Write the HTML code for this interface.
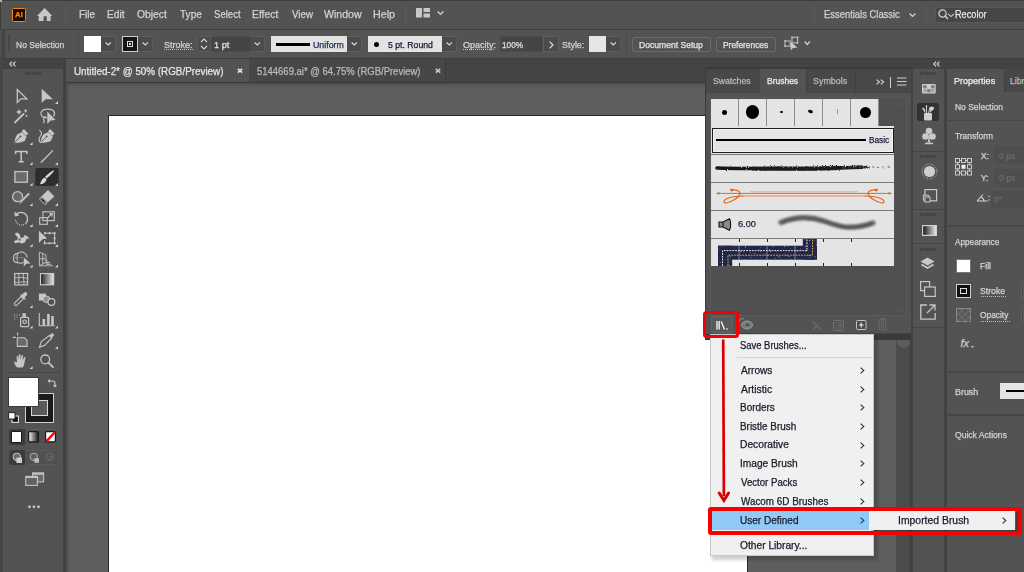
<!DOCTYPE html>
<html><head><meta charset="utf-8"><title>Illustrator</title>
<style>
*{margin:0;padding:0;box-sizing:border-box}
html,body{width:1024px;height:572px;overflow:hidden;background:#535353;font-family:"Liberation Sans",sans-serif;position:relative}
.a{position:absolute}
.t{position:absolute;white-space:nowrap;line-height:1;font-variant-ligatures:none;-webkit-text-stroke:0.25px currentColor}
svg.a{overflow:visible}
</style></head><body>

<div class="a" style="left:0px;top:0px;width:1024px;height:29px;background:#535353;"></div>
<div class="a" style="left:0px;top:0px;width:1024px;height:1px;background:#3e3e3e;"></div>
<div class="a" style="left:0px;top:0px;width:1px;height:572px;background:#3c3c3c;"></div>
<div class="a" style="left:0px;top:0px;width:1.5px;height:1.5px;background:#d8aa98;"></div>
<div class="a" style="left:12px;top:8px;width:14px;height:13.5px;background:#1e0c00;border:1.2px solid #f08a12;border-radius:1.5px"></div>
<div class="t" style="left:14.64px;top:10.93px;font-size:8px;color:#f7830a;font-weight:bold;transform:scaleX(0.9753);transform-origin:0 0;">Ai</div>
<svg class="a" style="left:37.3px;top:8.1px;" width="16" height="13.2" viewBox="0 0 16 13.2"><path d="M7.7 0 L15.3 7.9 L13.6 7.9 L13.6 13 L9.8 13 L9.8 8.2 L6.6 8.2 L6.6 13 L1.7 13 L1.7 7.9 L0 7.9 Z" fill="#c8c8c8"/></svg>
<div class="a" style="left:65px;top:6px;width:1px;height:17px;background:#5c5c5c;"></div>
<div class="t" style="left:78.90px;top:8.81px;font-size:10.5px;color:#d2d2d2;font-weight:normal;transform:scaleX(0.9524);transform-origin:0 0;">File</div>
<div class="t" style="left:106.99px;top:8.81px;font-size:10.5px;color:#d2d2d2;font-weight:normal;transform:scaleX(0.9698);transform-origin:0 0;">Edit</div>
<div class="t" style="left:137.18px;top:8.81px;font-size:10.5px;color:#d2d2d2;font-weight:normal;transform:scaleX(0.9860);transform-origin:0 0;">Object</div>
<div class="t" style="left:179.60px;top:8.81px;font-size:10.5px;color:#d2d2d2;font-weight:normal;transform:scaleX(0.9615);transform-origin:0 0;">Type</div>
<div class="t" style="left:213.52px;top:8.81px;font-size:10.5px;color:#d2d2d2;font-weight:normal;transform:scaleX(0.9104);transform-origin:0 0;">Select</div>
<div class="t" style="left:252.47px;top:8.81px;font-size:10.5px;color:#d2d2d2;font-weight:normal;transform:scaleX(0.9874);transform-origin:0 0;">Effect</div>
<div class="t" style="left:291.60px;top:8.81px;font-size:10.5px;color:#d2d2d2;font-weight:normal;transform:scaleX(0.9259);transform-origin:0 0;">View</div>
<div class="t" style="left:324.40px;top:8.81px;font-size:10.5px;color:#d2d2d2;font-weight:normal;transform:scaleX(1.0059);transform-origin:0 0;">Window</div>
<div class="t" style="left:373.44px;top:8.81px;font-size:10.5px;color:#d2d2d2;font-weight:normal;transform:scaleX(1.0211);transform-origin:0 0;">Help</div>
<div class="a" style="left:405px;top:6px;width:1px;height:17px;background:#5c5c5c;"></div>
<svg class="a" style="left:416px;top:8px;" width="15" height="10" viewBox="0 0 15 10"><rect x="0" y="0" width="6" height="9.5" fill="#c8c8c8"/><rect x="7.5" y="0" width="6.5" height="4" fill="#c8c8c8"/><rect x="7.5" y="5.5" width="6.5" height="4" fill="#c8c8c8"/></svg>
<svg class="a" style="left:437.3px;top:11px;" width="7" height="4" viewBox="0 0 7 4"><path d="M0.6 0.6 L3.5 3.4 L6.4 0.6" fill="none" stroke="#d0d0d0" stroke-width="1.4"/></svg>
<div class="a" style="left:814px;top:6px;width:1px;height:17px;background:#5c5c5c;"></div>
<div class="t" style="left:823.85px;top:8.81px;font-size:10.5px;color:#d2d2d2;font-weight:normal;transform:scaleX(0.8961);transform-origin:0 0;">Essentials Classic</div>
<svg class="a" style="left:908.5px;top:13px;" width="7" height="4" viewBox="0 0 7 4"><path d="M0.6 0.6 L3.5 3.4 L6.4 0.6" fill="none" stroke="#d0d0d0" stroke-width="1.4"/></svg>
<div class="a" style="left:926px;top:6px;width:1px;height:17px;background:#5c5c5c;"></div>
<div class="a" style="left:935px;top:6.8px;width:95px;height:16.2px;background:#464646;border-radius:3px;border:1px solid #585858"></div>
<svg class="a" style="left:937.5px;top:8.8px;" width="17" height="12" viewBox="0 0 17 12"><circle cx="4.5" cy="4.5" r="3.6" fill="none" stroke="#cfcfcf" stroke-width="1.3"/><path d="M7.1 7.1 L9.4 9.6" stroke="#cfcfcf" stroke-width="1.5" stroke-linecap="round"/><path d="M10 4.8 L13 7.6 L16 4.8" fill="none" stroke="#cfcfcf" stroke-width="1.1"/></svg>
<div class="t" style="left:955.17px;top:8.81px;font-size:10.5px;color:#e6e6e6;font-weight:normal;transform:scaleX(0.8728);transform-origin:0 0;">Recolor</div>
<div class="a" style="left:0px;top:29px;width:1024px;height:1px;background:#3f3f3f;"></div>
<div class="a" style="left:0px;top:30px;width:1024px;height:28px;background:#535353;"></div>
<div class="a" style="left:1px;top:30px;width:2.5px;height:28px;background:#474747;"></div>
<div class="a" style="left:3.5px;top:30px;width:1px;height:28px;background:#424242;"></div>
<svg class="a" style="left:8px;top:35px;" width="2" height="17" viewBox="0 0 2 17"><path d="M1 0 V17" stroke="#3a3a3a" stroke-width="1.6" stroke-dasharray="1.3 1"/></svg>
<div class="t" style="left:16.32px;top:40.89px;font-size:8.4px;color:#d2d2d2;font-weight:normal;transform:scaleX(1.0158);transform-origin:0 0;">No Selection</div>
<div class="a" style="left:78px;top:34px;width:1px;height:20px;background:#4a4a4a;"></div>
<div class="a" style="left:84px;top:36px;width:17px;height:16px;background:#ffffff;"></div>
<div class="a" style="left:101px;top:36px;width:15px;height:16px;background:#4b4b4b;border:1px solid #5d5d5d;border-left:none;border-radius:0 2px 2px 0"></div>
<svg class="a" style="left:105.2px;top:41.8px;" width="6.5" height="3.5" viewBox="0 0 6.5 3.5"><path d="M0.6 0.6 L3.25 2.9 L5.9 0.6" fill="none" stroke="#d6d6d6" stroke-width="1.3"/></svg>
<div class="a" style="left:122px;top:36px;width:16px;height:16px;background:#161616;border:1px solid #cfcfcf"></div>
<div class="a" style="left:127px;top:41px;width:6px;height:6px;border:1px solid #e0e0e0"></div>
<div class="a" style="left:129px;top:43px;width:2px;height:2px;background:#e0e0e0;"></div>
<div class="a" style="left:138px;top:36px;width:15px;height:16px;background:#4b4b4b;border:1px solid #5d5d5d;border-left:none;border-radius:0 2px 2px 0"></div>
<svg class="a" style="left:142.2px;top:41.8px;" width="6.5" height="3.5" viewBox="0 0 6.5 3.5"><path d="M0.6 0.6 L3.25 2.9 L5.9 0.6" fill="none" stroke="#d6d6d6" stroke-width="1.3"/></svg>
<div class="t" style="left:163.55px;top:41.39px;font-size:8.4px;color:#d2d2d2;font-weight:normal;transform:scaleX(1.0765);transform-origin:0 0;">Stroke:</div>
<svg class="a" style="left:164px;top:49px;" width="29" height="1" viewBox="0 0 29 1"><path d="M0 0.5 H29" stroke="#c0c0c0" stroke-width="1" stroke-dasharray="1 1"/></svg>
<div class="a" style="left:197px;top:36px;width:14px;height:16px;background:#4b4b4b;border:1px solid #5d5d5d;border-radius:2px 0 0 2px"></div>
<svg class="a" style="left:200px;top:38px;" width="8" height="12" viewBox="0 0 8 12"><path d="M1 4 L4 1 L7 4 M1 8 L4 11 L7 8" fill="none" stroke="#d6d6d6" stroke-width="1.1"/></svg>
<div class="a" style="left:211px;top:36px;width:39px;height:16px;background:#454545;border-top:1px solid #4d4d4d;border-bottom:1px solid #4d4d4d"></div>
<div class="t" style="left:214.36px;top:41.39px;font-size:8.4px;color:#e0e0e0;font-weight:normal;transform:scaleX(1.0931);transform-origin:0 0;">1 pt</div>
<div class="a" style="left:250px;top:36px;width:15px;height:16px;background:#4b4b4b;border:1px solid #5d5d5d;border-left:none;border-radius:0 2px 2px 0"></div>
<svg class="a" style="left:254.2px;top:41.8px;" width="6.5" height="3.5" viewBox="0 0 6.5 3.5"><path d="M0.6 0.6 L3.25 2.9 L5.9 0.6" fill="none" stroke="#d6d6d6" stroke-width="1.3"/></svg>
<div class="a" style="left:271px;top:36px;width:76px;height:16px;background:#e3e3e3;"></div>
<div class="a" style="left:276px;top:43px;width:34px;height:3px;background:#000;"></div>
<div class="t" style="left:312.70px;top:41.22px;font-size:8.6px;color:#1e2a50;font-weight:normal;transform:scaleX(1.0244);transform-origin:0 0;">Uniform</div>
<div class="a" style="left:347px;top:36px;width:15px;height:16px;background:#4b4b4b;border:1px solid #5d5d5d;border-left:none;border-radius:0 2px 2px 0"></div>
<svg class="a" style="left:351.2px;top:41.8px;" width="6.5" height="3.5" viewBox="0 0 6.5 3.5"><path d="M0.6 0.6 L3.25 2.9 L5.9 0.6" fill="none" stroke="#d6d6d6" stroke-width="1.3"/></svg>
<div class="a" style="left:368px;top:36px;width:74px;height:16px;background:#e3e3e3;"></div>
<div class="a" style="left:374px;top:41.5px;width:5px;height:5px;border-radius:50%;background:#000"></div>
<div class="t" style="left:388.25px;top:41.22px;font-size:8.6px;color:#161a30;font-weight:normal;transform:scaleX(1.0111);transform-origin:0 0;">5 pt. Round</div>
<div class="a" style="left:442px;top:36px;width:15px;height:16px;background:#4b4b4b;border:1px solid #5d5d5d;border-left:none;border-radius:0 2px 2px 0"></div>
<svg class="a" style="left:446.2px;top:41.8px;" width="6.5" height="3.5" viewBox="0 0 6.5 3.5"><path d="M0.6 0.6 L3.25 2.9 L5.9 0.6" fill="none" stroke="#d6d6d6" stroke-width="1.3"/></svg>
<div class="t" style="left:462.55px;top:41.39px;font-size:8.4px;color:#d2d2d2;font-weight:normal;transform:scaleX(1.0724);transform-origin:0 0;">Opacity:</div>
<svg class="a" style="left:463px;top:49px;" width="32" height="1" viewBox="0 0 32 1"><path d="M0 0.5 H32" stroke="#c0c0c0" stroke-width="1" stroke-dasharray="1 1"/></svg>
<div class="a" style="left:500px;top:36px;width:43px;height:16px;background:#454545;border:1px solid #4d4d4d;border-radius:2px 0 0 2px"></div>
<div class="t" style="left:502.42px;top:41.39px;font-size:8.4px;color:#e0e0e0;font-weight:normal;transform:scaleX(0.9824);transform-origin:0 0;">100%</div>
<div class="a" style="left:543px;top:36px;width:16px;height:16px;background:#4b4b4b;border:1px solid #5d5d5d;border-radius:0 2px 2px 0"></div>
<svg class="a" style="left:548.5px;top:40.5px;" width="5" height="8" viewBox="0 0 5 8"><path d="M0.6 0.6 L4 4 L0.6 7.4" fill="none" stroke="#d6d6d6" stroke-width="1.3"/></svg>
<div class="t" style="left:562.25px;top:41.39px;font-size:8.4px;color:#d2d2d2;font-weight:normal;transform:scaleX(1.0644);transform-origin:0 0;">Style:</div>
<div class="a" style="left:589px;top:36px;width:17px;height:16px;background:#e6e6e6;"></div>
<div class="a" style="left:606px;top:36px;width:15px;height:16px;background:#4b4b4b;border:1px solid #5d5d5d;border-left:none;border-radius:0 2px 2px 0"></div>
<svg class="a" style="left:610.2px;top:41.8px;" width="6.5" height="3.5" viewBox="0 0 6.5 3.5"><path d="M0.6 0.6 L3.25 2.9 L5.9 0.6" fill="none" stroke="#d6d6d6" stroke-width="1.3"/></svg>
<div class="a" style="left:626px;top:34px;width:1px;height:20px;background:#4a4a4a;"></div>
<div class="a" style="left:632px;top:36.5px;width:79px;height:15.5px;border:1px solid #6b6b6b;border-radius:2px"></div>
<div class="t" style="left:639.31px;top:41.39px;font-size:8.4px;color:#e4e4e4;font-weight:normal;transform:scaleX(1.0232);transform-origin:0 0;">Document Setup</div>
<div class="a" style="left:716px;top:36.5px;width:60px;height:15.5px;border:1px solid #6b6b6b;border-radius:2px"></div>
<div class="t" style="left:722.93px;top:41.39px;font-size:8.4px;color:#e4e4e4;font-weight:normal;transform:scaleX(1.0011);transform-origin:0 0;">Preferences</div>
<svg class="a" style="left:783px;top:35px;" width="16" height="17" viewBox="0 0 16 17"><g fill="none" stroke="#bdbdbd" stroke-width="1.1"><rect x="9" y="2.3" width="5.6" height="5.6"/><rect x="2" y="6" width="5.2" height="5.2"/></g><g fill="#bdbdbd"><rect x="8.2" y="1.5" width="1.6" height="1.6"/><rect x="13.8" y="1.5" width="1.6" height="1.6"/><rect x="13.8" y="7.1" width="1.6" height="1.6"/><rect x="1.2" y="5.2" width="1.6" height="1.6"/><rect x="1.2" y="10.4" width="1.6" height="1.6"/></g><path d="M7.7 7 L7.7 15.3 L10 13 L14.4 12.6 Z" fill="#d0d0d0"/></svg>
<svg class="a" style="left:804px;top:41px;" width="6.5" height="4" viewBox="0 0 6.5 4"><path d="M0.6 0.6 L3.25 3.4 L5.9 0.6" fill="none" stroke="#d0d0d0" stroke-width="1.4"/></svg>
<div class="a" style="left:0px;top:57.5px;width:1024px;height:1.5px;background:#3d3d3d;"></div>
<div class="a" style="left:0px;top:59px;width:64px;height:513px;background:#535353;"></div>
<div class="a" style="left:0px;top:59px;width:3px;height:513px;background:#474747;"></div>
<div class="a" style="left:3px;top:59px;width:61px;height:10px;background:#434343;"></div>
<svg class="a" style="left:8.6px;top:61px;" width="7" height="6" viewBox="0 0 7 6"><path d="M3 0.6 L0.8 3 L3 5.4 M6.4 0.6 L4.2 3 L6.4 5.4" fill="none" stroke="#d0d0d0" stroke-width="1.2"/></svg>
<svg class="a" style="left:25px;top:72px;" width="17" height="3" viewBox="0 0 17 3"><path d="M0 1.5 H17" stroke="#3a3a3a" stroke-width="3" stroke-dasharray="1.2 1.2"/></svg>
<div class="a" style="left:63px;top:59px;width:3px;height:513px;background:#404040;"></div>
<svg class="a" style="left:0;top:0" width="64" height="572" viewBox="0 0 64 572"><path d="M58 101 L58 104 L55 104 Z" fill="#d0d0d0"/><path d="M32.6 141.9 L32.6 144.9 L29.6 144.9 Z" fill="#d0d0d0"/><path d="M32.6 162 L32.6 165 L29.6 165 Z" fill="#d0d0d0"/><path d="M58 162 L58 165 L55 165 Z" fill="#d0d0d0"/><path d="M32.6 182.8 L32.6 185.8 L29.6 185.8 Z" fill="#d0d0d0"/><path d="M58 183 L58 186 L55 186 Z" fill="#d0d0d0"/><path d="M32.6 203 L32.6 206 L29.6 206 Z" fill="#d0d0d0"/><path d="M58 203 L58 206 L55 206 Z" fill="#d0d0d0"/><path d="M32.6 224 L32.6 227 L29.6 227 Z" fill="#d0d0d0"/><path d="M58 224 L58 227 L55 227 Z" fill="#d0d0d0"/><path d="M32.6 244 L32.6 247 L29.6 247 Z" fill="#d0d0d0"/><path d="M58 244 L58 247 L55 247 Z" fill="#d0d0d0"/><path d="M32.6 264.5 L32.6 267.5 L29.6 267.5 Z" fill="#d0d0d0"/><path d="M58 264.5 L58 267.5 L55 267.5 Z" fill="#d0d0d0"/><path d="M32.6 305 L32.6 308 L29.6 308 Z" fill="#d0d0d0"/><path d="M32.6 325.5 L32.6 328.5 L29.6 328.5 Z" fill="#d0d0d0"/><path d="M58 325.5 L58 328.5 L55 328.5 Z" fill="#d0d0d0"/><path d="M58 346 L58 349 L55 349 Z" fill="#d0d0d0"/><path d="M32.6 366 L32.6 369 L29.6 369 Z" fill="#d0d0d0"/><path d="M17.3 89.6 L17.3 102.4 L20.9 98.9 L26.8 98.9 Z" fill="none" stroke="#c6c6c6" stroke-width="1.3" stroke-linejoin="miter"/><path d="M41.7 88.7 L41.7 103 L45.4 99.3 L52.9 99.3 Z" fill="#c6c6c6"/><path d="M15 122.4 L23.6 114" stroke="#c6c6c6" stroke-width="1.9" stroke-linecap="round"/><path d="M19 109 L19.96 111.04 L22 112 L19.96 112.96 L19 115 L18.04 112.96 L16 112 L18.04 111.04 Z M25.6 108.7 L26.272000000000002 110.128 L27.700000000000003 110.8 L26.272000000000002 111.472 L25.6 112.89999999999999 L24.928 111.472 L23.5 110.8 L24.928 110.128 Z M26.6 114.4 L27.112000000000002 115.488 L28.200000000000003 116 L27.112000000000002 116.512 L26.6 117.6 L26.088 116.512 L25.0 116 L26.088 115.488 Z" fill="#c6c6c6"/><path d="M46.5 117.8 C41.5 117.8 39.6 114 41.6 111.4 C44 108.4 52 108.4 54 111.6 C55 113.2 54.6 115 53.2 116.2" fill="none" stroke="#c6c6c6" stroke-width="1.2"/><path d="M46.5 117.8 C44.8 115.8 42.6 117.5 43.8 119.6 C44.6 121 44.2 122.2 43.2 123" fill="none" stroke="#c6c6c6" stroke-width="1.1"/><path d="M47.3 111.6 L47.3 124 L50.5 120.4 L55.6 120.1 Z" fill="#c6c6c6"/><path d="M14.3 142.7 C15 139.5 15.6 136.2 17.4 134.2 L21.8 132.2 L26.6 136.6 L24.7 141 C22 142.4 18 142.9 14.3 142.7 Z" fill="#c6c6c6"/><path d="M21.6 131.4 L23.9 129.1 L28.3 133.5 L26 135.8 Z" fill="#c6c6c6"/><path d="M14.8 142.2 L19.6 137.4" stroke="#535353" stroke-width="0.9"/><circle cx="20.4" cy="136.6" r="1" fill="#535353"/><path d="M40.5 142.7 C41.2 139.5 41.8 136.2 43.599999999999994 134.2 L48.0 132.2 L52.8 136.6 L50.9 141 C48.2 142.4 44.2 142.9 40.5 142.7 Z" fill="#c6c6c6"/><path d="M47.8 131.4 L50.099999999999994 129.1 L54.5 133.5 L52.2 135.8 Z" fill="#c6c6c6"/><path d="M41.0 142.2 L45.8 137.4" stroke="#535353" stroke-width="0.9"/><circle cx="46.599999999999994" cy="136.6" r="1" fill="#535353"/><path d="M39.3 130.1 C41 131.2 42 132.8 41.2 134.6 C40.4 136.4 38.8 137.6 39 139.6 C39.1 141 40 142.2 41 142.6" fill="none" stroke="#c6c6c6" stroke-width="1.1"/><path d="M15.6 154 V151.5 H26.8 V154 M21.2 151.5 V161.8 M18.6 161.8 H23.8" fill="none" stroke="#c6c6c6" stroke-width="1.5"/><path d="M41.3 162.3 L52.7 150.6" stroke="#c6c6c6" stroke-width="1.3" stroke-linecap="round"/><rect x="14.9" y="171.6" width="12.5" height="10.6" fill="#6b6b6b" stroke="#c6c6c6" stroke-width="1.3"/><rect x="35.2" y="168" width="23.5" height="18" rx="2" fill="#2d2d2d"/><path d="M58 183 L58 186 L55 186 Z" fill="#d0d0d0"/><path d="M54.4 170.1 C53.4 172.6 49.4 176.2 46.6 178.6 L45 177 C47.6 174.4 51.6 171 54.4 170.1 Z" fill="#d8d8d8"/><path d="M44.6 177.4 L46.6 179.4 C45.8 182.4 43.2 184.1 39.8 184.3 C41 182.2 41.4 178.9 44.6 177.4 Z" fill="#d8d8d8"/><circle cx="17.6" cy="196.7" r="5" fill="#686868" stroke="#c6c6c6" stroke-width="1.3"/><path d="M19 204.4 L20 200.9 L28 192.9 C28.9 192 30.6 193.7 29.7 194.6 L21.7 202.6 Z" fill="#c6c6c6" stroke="#535353" stroke-width="0.6"/><path d="M48 190 L54.4 196.4 L47.6 202.4 L41.4 196.4 Z" fill="#c6c6c6"/><path d="M41.4 197.2 L47 202.8 L45 204.6 L40 199.6 C39.4 199 39.6 198.6 40 198.3 Z" fill="#535353" stroke="#c6c6c6" stroke-width="1"/><path d="M42.2 199.4 L44.6 201.8" stroke="#2b2b2b" stroke-width="1.6"/><path d="M16.3 214.2 A6.2 6.2 0 1 1 25.6 223.6" fill="none" stroke="#c6c6c6" stroke-width="1.3"/><path d="M25.6 223.6 A6.2 6.2 0 0 1 15.4 219" fill="none" stroke="#c6c6c6" stroke-width="1.2" stroke-dasharray="0.9 1.1"/><path d="M14.4 211.6 L14.8 216.4 L19.4 215.6 Z" fill="#c6c6c6"/><rect x="42.9" y="211.8" width="11.4" height="8.8" fill="none" stroke="#c6c6c6" stroke-width="1.1"/><rect x="39.7" y="217.7" width="7.6" height="6.6" fill="none" stroke="#c6c6c6" stroke-width="1.1"/><path d="M47.5 218 L51.8 213.8 M49.3 213.6 H52.1 V216.4" fill="none" stroke="#c6c6c6" stroke-width="1.1"/><path d="M14 241.5 C15 240 17 241 17.6 239 C18.6 236 15 236 15.2 234 C15.4 232 18.4 232.2 19.8 234.6 C21 236.6 20 238.4 22 238 C23.4 237.6 22.6 234.8 25 235.2 C27.4 235.6 29 237.6 29.4 239.6 C28.2 238.4 27 238.2 26.4 239.2 C25.8 240.6 25.2 243.6 21.6 243.4 C19.6 243.3 18.6 242.2 17.2 242.8 C16 243.6 14.6 243.4 14 241.5 Z" fill="#c6c6c6"/><circle cx="19.6" cy="239.6" r="1.1" fill="#535353"/><circle cx="23.4" cy="236" r="0.9" fill="#535353"/><path d="M38.9 230.8 L38.9 243 L42.6 239.2 L47.2 238.6 Z" fill="#c6c6c6"/><path d="M45.6 233.2 H54.6 V243.2 H44.6 V240.5" fill="none" stroke="#c6c6c6" stroke-width="1"/><g fill="#c6c6c6"><rect x="44" y="232.2" width="2" height="2"/><rect x="48.6" y="232.2" width="2" height="2"/><rect x="53.6" y="232.2" width="2" height="2"/><rect x="53.6" y="237.2" width="2" height="2"/><rect x="53.6" y="242.2" width="2" height="2"/><rect x="48.6" y="242.2" width="2" height="2"/><rect x="43.6" y="242.2" width="2" height="2"/></g><path d="M23.5 262.2 C22 263.2 19.5 263.4 17.8 262.6 C16.2 263 13.4 262 13.4 258.4 C13.4 255 15.4 253.4 17.6 253.6 C19.4 251.4 23 251.4 25 253.4 C26.6 254.8 27.2 256.4 27 257.6" fill="none" stroke="#c6c6c6" stroke-width="1.1"/><path d="M17.8 253.8 C16.6 256 16.6 260 17.8 262.6" fill="none" stroke="#c6c6c6" stroke-width="0.9"/><path d="M15 257.7 H23" stroke="#c6c6c6" stroke-width="1" stroke-dasharray="1 1.2"/><path d="M23.8 257.4 L23.8 266.4 L26.3 263.8 L30.6 263.4 Z" fill="#c6c6c6"/><path d="M39.4 252.2 V265.8 H52.8 M39.4 252.2 L46 255 V262.4 L39.4 265.8 M39.4 258.8 H46 M42.8 253.6 V264 M46 262.4 H49.6 M46 260.6 H47.6" fill="none" stroke="#c6c6c6" stroke-width="0.9"/><path d="M46 262.4 L52.8 265.8 H46 Z" fill="#8c8c8c"/><path d="M46 264.2 H51.4 M46 262.4 H49.6" stroke="#c6c6c6" stroke-width="0.8"/><rect x="14.7" y="273.5" width="12.9" height="11.4" fill="none" stroke="#c6c6c6" stroke-width="1.2"/><path d="M14.7 277.6 C18 278.6 21 276 27.6 278.6 M14.7 282 C19 283.4 22 280.4 27.6 282.6 M18.6 273.5 C19.6 277 17.8 280.6 19.2 284.9 M23.4 273.5 C22.8 277 24.6 281 23.8 284.9" fill="none" stroke="#c6c6c6" stroke-width="0.9"/><defs><linearGradient id="gt" x1="0" x2="1"><stop offset="0" stop-color="#1e1e1e"/><stop offset="1" stop-color="#ececec"/></linearGradient></defs><rect x="40.5" y="273.6" width="13.2" height="11.2" fill="url(#gt)" stroke="#d0d0d0" stroke-width="1.1"/><path d="M15.2 305.4 C14 304.6 14.2 303.4 15 302.6 L21.8 295.8 L24 298 L17.2 304.8 C16.4 305.6 15.8 305.8 15.2 305.4 Z" fill="none" stroke="#c6c6c6" stroke-width="1.1"/><path d="M21 296.4 L24.6 293 C25.6 292 27.4 293.8 26.4 294.8 L23.2 298.2 Z M20.6 294.6 L25.6 299.6" fill="#c6c6c6" stroke="#c6c6c6" stroke-width="1.2"/><rect x="38.9" y="293.6" width="7" height="7" fill="#c6c6c6"/><circle cx="46.4" cy="299.3" r="3.3" fill="#8e8e8e" stroke="#c6c6c6" stroke-width="1"/><circle cx="51.4" cy="302" r="3.4" fill="#535353" stroke="#c6c6c6" stroke-width="1.2"/><path d="M14 314.8 h1.2 M16.4 314.8 h1.2 M18.8 314.8 h1.2 M14 317.2 h1.2 M16.4 317.2 h1.2 M14 319.6 h1.2" stroke="#9a9a9a" stroke-width="1.2"/><rect x="20.6" y="317.4" width="8" height="9.3" rx="1" fill="none" stroke="#c6c6c6" stroke-width="1.2"/><rect x="22.4" y="313.2" width="3.4" height="3.6" fill="#c6c6c6"/><circle cx="24.6" cy="321.8" r="1.8" fill="none" stroke="#c6c6c6" stroke-width="1.2"/><path d="M39.3 313 V325.7 H54.7" fill="none" stroke="#c6c6c6" stroke-width="1.1"/><path d="M43.8 325.2 V318.9 M48.4 325.2 V314.1 M52.5 325.2 V315.9" stroke="#c6c6c6" stroke-width="2.6"/><path d="M17.6 332.6 V335.6 M12.8 337.4 H15.8" stroke="#c6c6c6" stroke-width="1.1"/><path d="M17.3 337.7 H24.4 L27 340.3 V346.4 H17.3 Z" fill="#686868" stroke="#c6c6c6" stroke-width="1.1"/><path d="M39.4 347.2 L41.4 341.6 L49.4 335.6 L51.8 338 L44.8 345.2 Z" fill="none" stroke="#c6c6c6" stroke-width="1.1"/><path d="M49.4 335.6 L51.6 333.4 C52.6 332.6 54.6 334.4 53.8 335.4 L51.8 338 Z" fill="#c6c6c6"/><path d="M17.2 367.6 C15.4 365.6 13.8 363.2 14.4 362 C15 361.2 16.2 361.8 17 362.8 L16.6 356.8 C16.6 355.8 18.1 355.8 18.2 356.8 L18.7 360.6 L18.7 355 C18.7 353.9 20.4 353.9 20.4 355 L20.7 360.6 L21.4 355.6 C21.5 354.6 23.1 354.8 23 355.8 L22.6 361 L23.9 357.6 C24.2 356.7 25.6 357 25.4 358 L24.4 363 C24 365.4 23.2 366.8 22.6 367.6 Z" fill="#c6c6c6"/><circle cx="45.2" cy="359.4" r="4.4" fill="none" stroke="#c6c6c6" stroke-width="1.3"/><path d="M48.4 362.6 L53 367.2" stroke="#c6c6c6" stroke-width="1.8" stroke-linecap="round"/></svg>
<div class="a" style="left:8px;top:372px;width:52px;height:1px;background:#474747;"></div>
<div class="a" style="left:25px;top:393px;width:29px;height:30px;background:#1b1b1b;border:1px solid #d0d0d0"></div>
<div class="a" style="left:31px;top:400px;width:16.5px;height:16px;background:#5a5a5a;border:1.4px solid #d8d8d8"></div>
<div class="a" style="left:8.4px;top:377.4px;width:30.4px;height:30px;background:#ffffff;border:1px solid #3a3a3a"></div>
<svg class="a" style="left:46.5px;top:378px;" width="10" height="10" viewBox="0 0 10 10"><path d="M2 3 H5.5 C7 3 8 4 8 5.5 V8" fill="none" stroke="#c6c6c6" stroke-width="1.2"/><path d="M0.5 3 L3 0.8 V5.2 Z M5.8 7 L10 7 L8 9.6 Z" fill="#c6c6c6"/></svg>
<svg class="a" style="left:8px;top:412px;" width="11" height="11" viewBox="0 0 11 11"><rect x="4" y="4" width="6.4" height="6.4" fill="#111" stroke="#e0e0e0" stroke-width="1.1"/><rect x="0.6" y="0.6" width="6.4" height="6.4" fill="#fff" stroke="#222" stroke-width="1"/></svg>
<div class="a" style="left:9.2px;top:428.6px;width:49.6px;height:16.7px;background:#505050;border:1px solid #5a5a5a;border-radius:3px"></div>
<div class="a" style="left:9.2px;top:428.6px;width:15.6px;height:16.7px;background:#3a3a3a;border-radius:3px 0 0 3px"></div>
<div class="a" style="left:11.3px;top:431.3px;width:10.8px;height:11.4px;background:#ffffff;border:1.2px solid #1a1a1a;border-radius:1px"></div>
<svg class="a" style="left:28px;top:431.3px;" width="11" height="11.4" viewBox="0 0 11 11.4"><defs><linearGradient id="g2" x1="0" x2="1"><stop offset="0" stop-color="#f4f4f4"/><stop offset="1" stop-color="#1a1a1a"/></linearGradient></defs><rect x="0.6" y="0.6" width="9.8" height="10.2" rx="1" fill="url(#g2)" stroke="#1a1a1a" stroke-width="1.2"/></svg>
<svg class="a" style="left:45px;top:431.3px;" width="11" height="11.4" viewBox="0 0 11 11.4"><rect x="0.6" y="0.6" width="9.8" height="10.2" rx="1" fill="#fff" stroke="#1a1a1a" stroke-width="1.2"/><path d="M1.4 10.4 L9.8 1.2" stroke="#ff0000" stroke-width="2.4"/></svg>
<div class="a" style="left:9.2px;top:450.3px;width:49.6px;height:14.7px;background:#505050;border:1px solid #595959;border-radius:3px"></div>
<div class="a" style="left:9.2px;top:450.3px;width:15.6px;height:14.7px;background:#3b3b3b;border-radius:3px 0 0 3px"></div>
<svg class="a" style="left:12px;top:451.5px;" width="12" height="12" viewBox="0 0 12 12"><circle cx="4.8" cy="4.8" r="3.6" fill="#6a6a6a" stroke="#c4c4c4" stroke-width="1.1"/><rect x="4.4" y="5.6" width="5.6" height="5.4" fill="#cfcfcf"/></svg>
<svg class="a" style="left:28.6px;top:451.5px;" width="12" height="12" viewBox="0 0 12 12"><circle cx="4.8" cy="4.8" r="3.6" fill="#5e5e5e" stroke="#a8a8a8" stroke-width="1.1"/><rect x="5.4" y="6.2" width="4.6" height="4.6" fill="#bcbcbc"/></svg>
<svg class="a" style="left:45.4px;top:452px;" width="11" height="11" viewBox="0 0 11 11"><circle cx="4.8" cy="4.8" r="3.6" fill="none" stroke="#6e6e6e" stroke-width="1"/><path d="M4.8 4.8 H8.4 M4.8 4.8 V8.4" stroke="#6e6e6e" stroke-width="0.9"/></svg>
<svg class="a" style="left:24.5px;top:472px;" width="20" height="14" viewBox="0 0 20 14"><rect x="7.6" y="0.9" width="11" height="9" fill="#6b6b6b" stroke="#c4c4c4" stroke-width="1.1"/><rect x="7.6" y="0.9" width="11" height="1.8" fill="#c4c4c4"/><rect x="0.8" y="4.4" width="11.6" height="9" fill="#626262" stroke="#c4c4c4" stroke-width="1.1"/><rect x="0.8" y="4.4" width="11.6" height="1.6" fill="#c4c4c4"/></svg>
<svg class="a" style="left:28px;top:505px;" width="12" height="4" viewBox="0 0 12 4"><circle cx="1.5" cy="1.8" r="1.4" fill="#c6c6c6"/><circle cx="6" cy="1.8" r="1.4" fill="#c6c6c6"/><circle cx="10.5" cy="1.8" r="1.4" fill="#c6c6c6"/></svg>
<div class="a" style="left:66px;top:59px;width:846px;height:23px;background:#444444;"></div>
<div class="a" style="left:66px;top:59px;width:183px;height:23px;background:#535353;"></div>
<div class="t" style="left:73.71px;top:67.23px;font-size:10px;color:#e6e6e6;font-weight:normal;transform:scaleX(0.9840);transform-origin:0 0;">Untitled-2* @ 50% (RGB/Preview)</div>
<svg class="a" style="left:236.9px;top:67.8px;" width="6" height="5.5" viewBox="0 0 6 5.5"><path d="M0.8 0.8 L5.2 4.7 M5.2 0.8 L0.8 4.7" stroke="#e8e8e8" stroke-width="1.6"/></svg>
<div class="a" style="left:249px;top:59px;width:197px;height:23px;background:#474747;border-right:1px solid #3a3a3a"></div>
<div class="t" style="left:257.22px;top:67.23px;font-size:10px;color:#bababa;font-weight:normal;transform:scaleX(0.9481);transform-origin:0 0;">5144669.ai* @ 64.75% (RGB/Preview)</div>
<svg class="a" style="left:434.9px;top:67.8px;" width="6" height="5.5" viewBox="0 0 6 5.5"><path d="M0.8 0.8 L5.2 4.7 M5.2 0.8 L0.8 4.7" stroke="#c8c8c8" stroke-width="1.6"/></svg>
<div class="a" style="left:66px;top:82px;width:846px;height:1px;background:#383838;"></div>
<div class="a" style="left:66px;top:83px;width:846px;height:489px;background:#5e5e5e;box-shadow:inset 2px 2px 3px rgba(0,0,0,0.18)"></div>
<div class="a" style="left:108px;top:115px;width:640px;height:457px;background:#262626;"></div>
<div class="a" style="left:109px;top:116px;width:638px;height:456px;background:#ffffff;"></div>
<div class="a" style="left:896px;top:83px;width:15px;height:489px;background:#4c4c4c;"></div>
<div class="a" style="left:896.5px;top:290px;width:13.5px;height:58px;background:#5c5c5c;border-radius:0 0 7px 7px"></div>
<div class="a" style="left:910px;top:83px;width:2px;height:489px;background:#3c3c3c;"></div>
<div class="a" style="left:705px;top:67px;width:206px;height:273px;background:#3a3a3a;"></div>
<div class="a" style="left:706px;top:69px;width:205px;height:265px;background:#535353;"></div>
<div class="a" style="left:706px;top:69px;width:205px;height:24px;background:#484848;"></div>
<div class="a" style="left:760px;top:69px;width:46px;height:24px;background:#535353;"></div>
<div class="a" style="left:806px;top:69px;width:50px;height:24px;background:#484848;border-left:1px solid #3f3f3f;border-right:1px solid #3f3f3f"></div>
<div class="t" style="left:713.47px;top:76.82px;font-size:8.6px;color:#b9b9b9;font-weight:normal;transform:scaleX(1.0072);transform-origin:0 0;">Swatches</div>
<div class="t" style="left:767.12px;top:76.82px;font-size:8.6px;color:#f0f0f0;font-weight:normal;transform:scaleX(0.9864);transform-origin:0 0;">Brushes</div>
<div class="t" style="left:812.55px;top:76.82px;font-size:8.6px;color:#b9b9b9;font-weight:normal;transform:scaleX(1.0357);transform-origin:0 0;">Symbols</div>
<svg class="a" style="left:875.5px;top:79px;" width="9" height="6" viewBox="0 0 9 6"><path d="M0.6 0.6 L3.4 3 L0.6 5.4 M4.8 0.6 L7.6 3 L4.8 5.4" fill="none" stroke="#cfcfcf" stroke-width="1.2"/></svg>
<div class="a" style="left:889.5px;top:76.5px;width:1px;height:11px;background:#cfcfcf;"></div>
<svg class="a" style="left:897px;top:77px;" width="10" height="9" viewBox="0 0 10 9"><path d="M0 1 H9.5 M0 4.5 H9.5 M0 8 H9.5" stroke="#cfcfcf" stroke-width="1.2"/></svg>
<div class="a" style="left:710px;top:97px;width:197px;height:219px;background:#505050;border:1px solid #5a5a5a"></div>
<svg class="a" style="left:895px;top:101px;" width="8" height="5" viewBox="0 0 8 5"><path d="M0.5 4.5 L4 1 L7.5 4.5" fill="none" stroke="#5f5f5f" stroke-width="1"/></svg>
<svg class="a" style="left:895px;top:308px;" width="8" height="5" viewBox="0 0 8 5"><path d="M0.5 0.5 L4 4 L7.5 0.5" fill="none" stroke="#5f5f5f" stroke-width="1"/></svg>
<div class="a" style="left:711px;top:99px;width:168px;height:27px;background:#8c8c8c;"></div>
<div class="a" style="left:711px;top:99px;width:27px;height:27px;background:#e4e4e4;"></div>
<div class="a" style="left:739px;top:99px;width:27px;height:27px;background:#e4e4e4;"></div>
<div class="a" style="left:767px;top:99px;width:27px;height:27px;background:#e4e4e4;"></div>
<div class="a" style="left:795px;top:99px;width:27px;height:27px;background:#e4e4e4;"></div>
<div class="a" style="left:823px;top:99px;width:27px;height:27px;background:#e4e4e4;"></div>
<div class="a" style="left:851px;top:99px;width:27px;height:27px;background:#e4e4e4;"></div>
<div class="a" style="left:722px;top:109.5px;width:5px;height:5px;border-radius:50%;background:#000"></div>
<div class="a" style="left:746px;top:105.4px;width:13.2px;height:13.2px;border-radius:50%;background:#000"></div>
<div class="a" style="left:780px;top:110.5px;width:2.5px;height:2px;border-radius:50%;background:#000"></div>
<div class="a" style="left:807.5px;top:110px;width:5px;height:3px;border-radius:50%;background:#000;transform:rotate(20deg)"></div>
<div class="a" style="left:837px;top:108.5px;width:1px;height:5px;background:#9a9a9a;"></div>
<div class="a" style="left:859.8px;top:106.8px;width:10.8px;height:10.8px;border-radius:50%;background:#000"></div>
<div class="a" style="left:711px;top:126px;width:183px;height:140px;background:#e4e4e4;"></div>
<div class="a" style="left:711px;top:154px;width:183px;height:1px;background:#7a7a7a;"></div>
<div class="a" style="left:711px;top:182px;width:183px;height:1px;background:#7a7a7a;"></div>
<div class="a" style="left:711px;top:210px;width:183px;height:1px;background:#7a7a7a;"></div>
<div class="a" style="left:711px;top:238px;width:183px;height:1px;background:#7a7a7a;"></div>
<div class="a" style="left:711.5px;top:127.5px;width:182px;height:25.5px;border:1px solid #1e1e1e;box-shadow:inset 0 0 0 1px #f4f4f4"></div>
<div class="a" style="left:716px;top:139.3px;width:150px;height:2px;background:#000;"></div>
<div class="t" style="left:868.64px;top:136.22px;font-size:8.6px;color:#1a1f3a;font-weight:normal;transform:scaleX(0.9541);transform-origin:0 0;">Basic</div>
<svg class="a" style="left:712px;top:160px;" width="182" height="16" viewBox="0 0 182 16"><defs><filter id="rough" x="-5%" y="-50%" width="110%" height="200%"><feTurbulence type="fractalNoise" baseFrequency="0.9" numOctaves="2" seed="3"/><feDisplacementMap in="SourceGraphic" scale="2.6"/></filter></defs><g filter="url(#rough)"><path d="M5 8 C30 9 60 8 90 8.6 C110 9 130 7.5 150 7.2" fill="none" stroke="#151515" stroke-width="3.6" stroke-linecap="round"/><path d="M40 8.6 C70 9.4 100 9 125 8" fill="none" stroke="#222" stroke-width="4.4" stroke-opacity="0.7"/><path d="M130 7.6 C140 7 148 7 158 7.2" fill="none" stroke="#333" stroke-width="2.6" stroke-dasharray="4 1.5"/><path d="M160 7 h2.5 M165 7.5 h2 M170 7 h1.5 M175 7.2 h3" stroke="#777" stroke-width="1.2"/></g></svg>
<svg class="a" style="left:715px;top:188px;" width="178" height="20" viewBox="0 0 178 20"><path d="M35 3.7 H143" stroke="#f3bb9e" stroke-width="1.4"/><path d="M27 8 H151" stroke="#eea37c" stroke-width="1.5"/><path d="M2 5.4 H176" stroke="#b5803f" stroke-width="1"/><path d="M0.5 5.4 L4.5 4 L4.5 6.8 Z M177.5 5.4 L173.5 4 L173.5 6.8 Z" fill="#b5803f"/><path d="M17 2 C22.5 1.6 25.6 3.6 24.8 6.2 C23.8 9.2 16.4 14.6 11.4 15 C7.8 15.4 8.2 12.4 12.2 10.6 C16.2 8.8 20 8.2 28 8" fill="none" stroke="#e8641c" stroke-width="1.15"/><path d="M14.6 0.6 L20 1.6 L16.2 3.8 Z" fill="#e8641c"/><path d="M161 2 C155.5 1.6 152.4 3.6 153.2 6.2 C154.2 9.2 161.6 14.6 166.6 15 C170.2 15.4 169.8 12.4 165.8 10.6 C161.8 8.8 158 8.2 150 8" fill="none" stroke="#e8641c" stroke-width="1.15"/><path d="M163.4 0.6 L158 1.6 L161.8 3.8 Z" fill="#e8641c"/></svg>
<svg class="a" style="left:718px;top:218px;" width="14" height="14" viewBox="0 0 14 14"><path d="M1 4 H5 L11.5 0.8 C13 3 13 10 11.5 12.2 L5 9 H1 Z" fill="#8a8a8a" stroke="#111" stroke-width="1.1"/><path d="M5 4 V9" stroke="#111"/></svg>
<div class="t" style="left:738.04px;top:220.42px;font-size:8.6px;color:#222a44;font-weight:normal;transform:scaleX(1.0690);transform-origin:0 0;">6.00</div>
<svg class="a" style="left:776px;top:212px;" width="102" height="24" viewBox="0 0 102 24"><defs><filter id="bl" x="-10%" y="-50%" width="120%" height="200%"><feGaussianBlur stdDeviation="0.9"/></filter></defs><g filter="url(#bl)"><path d="M5 10.5 C16 6 30 3 48 9 C62 14 74 19 97 11" fill="none" stroke="#6a6a6a" stroke-width="5.2" stroke-linecap="round"/><path d="M5 9.6 C16 5 30 2.2 48 8 C62 13 74 18 97 10" fill="none" stroke="#444" stroke-width="1.1" opacity="0.8"/><path d="M6 11.6 C16 7.5 30 5 48 10.6 C62 15.4 74 20 96 12.4" fill="none" stroke="#3c3c3c" stroke-width="1.2" opacity="0.8"/></g></svg>
<div class="a" style="left:739px;top:239px;width:1px;height:3px;background:#222;"></div>
<div class="a" style="left:739px;top:263px;width:1px;height:3px;background:#222;"></div>
<div class="a" style="left:767px;top:239px;width:1px;height:3px;background:#222;"></div>
<div class="a" style="left:767px;top:263px;width:1px;height:3px;background:#222;"></div>
<div class="a" style="left:795px;top:239px;width:1px;height:3px;background:#222;"></div>
<div class="a" style="left:795px;top:263px;width:1px;height:3px;background:#222;"></div>
<div class="a" style="left:823px;top:239px;width:1px;height:3px;background:#222;"></div>
<div class="a" style="left:823px;top:263px;width:1px;height:3px;background:#222;"></div>
<div class="a" style="left:851px;top:239px;width:1px;height:3px;background:#222;"></div>
<div class="a" style="left:851px;top:263px;width:1px;height:3px;background:#222;"></div>
<svg class="a" style="left:718px;top:239px;" width="99" height="27" viewBox="0 0 99 27"><defs><filter id="spk" x="0" y="0" width="100%" height="100%"><feTurbulence type="fractalNoise" baseFrequency="1.2" numOctaves="1" seed="7" result="n"/><feColorMatrix in="n" type="matrix" values="0 0 0 0 0.75  0 0 0 0 0.78  0 0 0 0 0.9  0 0 0 4 -2.75" result="s"/><feComposite in="s" in2="SourceGraphic" operator="in" result="s2"/><feMerge><feMergeNode in="SourceGraphic"/><feMergeNode in="s2"/></feMerge></filter></defs><g filter="url(#spk)"><g fill="#22264a"><rect x="0" y="6.7" width="99" height="14"/><rect x="0" y="6.7" width="14.2" height="20.3"/><rect x="84.8" y="0" width="14" height="20.7"/></g></g><path d="M21 6.7 V20.7 M49 6.7 V20.7 M77 6.7 V20.7" stroke="#9aa0b8" stroke-width="0.9" opacity="0.8"/><path d="M4.5 27 V11.6 H89 V0" fill="none" stroke="#e4e4ea" stroke-width="1" stroke-dasharray="1.8 1"/><path d="M10 27 V16.2 H94.5 V0" fill="none" stroke="#cfa54a" stroke-width="1" stroke-dasharray="1.8 1"/></svg>
<div class="a" style="left:706px;top:316px;width:205px;height:18px;background:#535353;"></div>
<div class="a" style="left:734px;top:333px;width:177px;height:1px;background:#444;"></div>
<div class="a" style="left:710.5px;top:315.7px;width:22.5px;height:17.6px;background:#5a5a5a;border:1px solid #646464;border-radius:2px"></div>
<svg class="a" style="left:715.5px;top:319.5px;" width="14" height="11" viewBox="0 0 14 11"><path d="M1 1 V9.5 M3.2 1 V9.5 M5.2 1.5 L8.5 9.5" stroke="#f2f2f2" stroke-width="1.4"/><path d="M10 9 H12" stroke="#f2f2f2" stroke-width="1"/></svg>
<svg class="a" style="left:738px;top:316px;" width="15" height="14" viewBox="0 0 15 14"><path d="M1 5 C2 3 4 2 6 3" fill="none" stroke="#8a8a8a" stroke-width="1.1"/><ellipse cx="9" cy="9" rx="5.5" ry="4" fill="#777" stroke="#9a9a9a"/><ellipse cx="9.5" cy="9" rx="3" ry="2.2" fill="#555" stroke="#999" stroke-width="0.8"/></svg>
<svg class="a" style="left:811px;top:319.5px;" width="11" height="11" viewBox="0 0 11 11"><path d="M1 1 L10 10" stroke="#6c6c6c" stroke-width="1.3"/><path d="M10 1 L4.5 6.5 C3 7 2 8.5 1.2 10.2 C3 9.6 4.2 8.6 5 7.2 Z" fill="#6c6c6c"/></svg>
<svg class="a" style="left:832.5px;top:319.5px;" width="11" height="11" viewBox="0 0 11 11"><rect x="0.5" y="0.5" width="10" height="10" rx="1" fill="none" stroke="#6e6e6e"/><path d="M2.5 3 h1 M5 3 H9 M2.5 5.5 h1 M5 5.5 H9 M2.5 8 h1 M5 8 H9" stroke="#707070"/></svg>
<svg class="a" style="left:856px;top:319.8px;" width="10.5" height="10" viewBox="0 0 10.5 10"><rect x="0.5" y="0.5" width="9.5" height="9" rx="1" fill="#4a4a4a" stroke="#c4c4c4" stroke-width="1"/><path d="M5.25 2.6 V7.4 M2.8 5 H7.7" stroke="#e8e8e8" stroke-width="1.2"/></svg>
<svg class="a" style="left:878px;top:318px;" width="9" height="12" viewBox="0 0 9 12"><path d="M0 2 H9 M3 2 V0.5 H6 V2 M1.2 3 V11.5 H7.8 V3 M3.5 4 V10 M5.5 4 V10" fill="none" stroke="#6a6a6a" stroke-width="1"/></svg>
<div class="a" style="left:911px;top:59px;width:113px;height:513px;background:#535353;"></div>
<div class="a" style="left:911px;top:59px;width:113px;height:10px;background:#434343;"></div>
<svg class="a" style="left:932.7px;top:61px;" width="7" height="6" viewBox="0 0 7 6"><path d="M3 0.6 L0.8 3 L3 5.4 M6.4 0.6 L4.2 3 L6.4 5.4" fill="none" stroke="#d0d0d0" stroke-width="1.2"/></svg>
<div class="a" style="left:911px;top:69px;width:2px;height:503px;background:#424242;"></div>
<div class="a" style="left:944px;top:69px;width:3px;height:503px;background:#424242;"></div>
<svg class="a" style="left:920px;top:71.5px;" width="17" height="3" viewBox="0 0 17 3"><path d="M0 1.5 H17" stroke="#3a3a3a" stroke-width="3" stroke-dasharray="1.2 1.2"/></svg>
<svg class="a" style="left:921.7px;top:84.2px;" width="14" height="10" viewBox="0 0 14 10"><rect x="0" y="0" width="13.7" height="9.5" rx="1" fill="#cdcdcd"/><g fill="#7c7c7c"><rect x="1.2" y="1.2" width="3.4" height="3.2"/><rect x="9.1" y="1.2" width="3.4" height="3.2"/><rect x="5.15" y="5.1" width="3.4" height="3.2"/><rect x="1.2" y="5.1" width="3.4" height="3.2" opacity="0.5"/><rect x="9.1" y="5.1" width="3.4" height="3.2" opacity="0.5"/></g></svg>
<div class="a" style="left:917px;top:103px;width:22px;height:18px;background:#333333;border-radius:2px"></div>
<svg class="a" style="left:921px;top:104px;" width="15" height="17" viewBox="0 0 15 17"><path d="M5.5 9 V2 M7.5 9 L9 3" stroke="#d0d0d0" stroke-width="1"/><path d="M5.5 0.5 L4.5 3 L6.5 3 Z" fill="#d0d0d0"/><path d="M1 4 C3 3 5 6 4 9 Z" fill="#d0d0d0"/><path d="M9 3 C11 1.5 14 3 13 5 C12 6 10 7 9 9 Z" fill="#d0d0d0"/><rect x="3" y="9" width="8" height="7.5" rx="1" fill="#d0d0d0"/></svg>
<svg class="a" style="left:922px;top:127px;" width="14" height="18" viewBox="0 0 14 18"><circle cx="7" cy="4" r="3.3" fill="#c8c8c8"/><circle cx="3.5" cy="9.5" r="3.3" fill="#c8c8c8"/><circle cx="10.5" cy="9.5" r="3.3" fill="#c8c8c8"/><path d="M7 8 L7 15 M3 16.5 H11" stroke="#c8c8c8" stroke-width="1.6"/><path d="M5 15.5 L7 13 L9 15.5 Z" fill="#c8c8c8"/></svg>
<div class="a" style="left:913px;top:151px;width:31px;height:1px;background:#444;"></div>
<svg class="a" style="left:920px;top:155px;" width="17" height="3" viewBox="0 0 17 3"><path d="M0 1.5 H17" stroke="#3a3a3a" stroke-width="3" stroke-dasharray="1.2 1.2"/></svg>
<svg class="a" style="left:920.5px;top:163px;" width="17" height="17" viewBox="0 0 17 17"><circle cx="8.5" cy="8.5" r="5.6" fill="#cfcfcf"/><circle cx="8.5" cy="8.5" r="7.4" fill="none" stroke="#bdbdbd" stroke-width="0.9" stroke-dasharray="1.3 1.3"/></svg>
<svg class="a" style="left:921.5px;top:189px;" width="16" height="14" viewBox="0 0 16 14"><rect x="3" y="0.6" width="11.6" height="11.2" fill="none" stroke="#c8c8c8" stroke-width="1.2"/><rect x="1.4" y="6.2" width="5" height="5" fill="#535353" stroke="#c8c8c8" stroke-width="1"/><rect x="3" y="8" width="5" height="5" fill="#535353" stroke="#c8c8c8" stroke-width="1"/></svg>
<div class="a" style="left:913px;top:209px;width:31px;height:1px;background:#444;"></div>
<svg class="a" style="left:920px;top:213px;" width="17" height="3" viewBox="0 0 17 3"><path d="M0 1.5 H17" stroke="#3a3a3a" stroke-width="3" stroke-dasharray="1.2 1.2"/></svg>
<svg class="a" style="left:922px;top:224.5px;" width="15" height="11" viewBox="0 0 15 11"><defs><linearGradient id="g3" x1="0" x2="1"><stop offset="0" stop-color="#111"/><stop offset="1" stop-color="#f0f0f0"/></linearGradient></defs><rect x="0.6" y="0.6" width="13.8" height="9.8" fill="url(#g3)" stroke="#d0d0d0" stroke-width="1.2"/></svg>
<div class="a" style="left:913px;top:243px;width:31px;height:1px;background:#444;"></div>
<svg class="a" style="left:920px;top:248px;" width="17" height="3" viewBox="0 0 17 3"><path d="M0 1.5 H17" stroke="#3a3a3a" stroke-width="3" stroke-dasharray="1.2 1.2"/></svg>
<svg class="a" style="left:920px;top:257px;" width="15" height="15" viewBox="0 0 15 15"><path d="M7.5 0.5 L14.5 4.5 L7.5 8.5 L0.5 4.5 Z" fill="#c8c8c8"/><path d="M1.5 7.5 L7.5 11 L13.5 7.5" fill="none" stroke="#c8c8c8" stroke-width="1.8"/></svg>
<svg class="a" style="left:920px;top:281px;" width="16" height="16" viewBox="0 0 16 16"><rect x="0.6" y="0.6" width="9" height="9" fill="none" stroke="#c8c8c8" stroke-width="1.2"/><rect x="4.6" y="6" width="10.6" height="9.4" fill="#535353" stroke="#c8c8c8" stroke-width="1.2"/></svg>
<svg class="a" style="left:920px;top:304px;" width="16" height="16" viewBox="0 0 16 16"><path d="M7 1 H0.8 V15.2 H15.2 V9" fill="none" stroke="#c8c8c8" stroke-width="1.3"/><path d="M7 9 L14.5 1.5 M9.5 1 H15 V6.5" fill="none" stroke="#c8c8c8" stroke-width="1.3"/></svg>
<div class="a" style="left:913px;top:327px;width:31px;height:1px;background:#444;"></div>
<div class="a" style="left:947px;top:69px;width:77px;height:23px;background:#484848;"></div>
<div class="a" style="left:947px;top:69px;width:57px;height:23px;background:#535353;"></div>
<div class="a" style="left:1004px;top:69px;width:1px;height:23px;background:#3f3f3f;"></div>
<div class="t" style="left:953.88px;top:76.52px;font-size:8.6px;color:#f0f0f0;font-weight:normal;transform:scaleX(1.0504);transform-origin:0 0;">Properties</div>
<div class="t" style="left:1010.00px;top:76.52px;font-size:8.6px;color:#b9b9b9;font-weight:normal;">Libraries</div>
<div class="t" style="left:955.12px;top:102.99px;font-size:8.4px;color:#d2d2d2;font-weight:normal;transform:scaleX(1.0115);transform-origin:0 0;">No Selection</div>
<div class="a" style="left:947px;top:119.5px;width:77px;height:1.5px;background:#474747;"></div>
<div class="t" style="left:954.83px;top:131.89px;font-size:8.4px;color:#d2d2d2;font-weight:normal;transform:scaleX(1.0028);transform-origin:0 0;">Transform</div>
<svg class="a" style="left:955px;top:157.5px;" width="17" height="18" viewBox="0 0 17 18"><g fill="none" stroke="#d6d6d6" stroke-width="0.9"><rect x="0.5" y="0.5" width="4" height="4"/><rect x="6.5" y="0.5" width="4" height="4"/><rect x="12.5" y="0.5" width="4" height="4"/><rect x="0.5" y="6.8" width="4" height="4"/><rect x="12.5" y="6.8" width="4" height="4"/><rect x="0.5" y="13" width="4" height="4"/><rect x="6.5" y="13" width="4" height="4"/><rect x="12.5" y="13" width="4" height="4"/><path d="M4.5 2.5 H6.5 M10.5 2.5 H12.5 M4.5 15 H6.5 M10.5 15 H12.5 M2.5 4.5 V6.8 M14.5 4.5 V6.8 M2.5 10.8 V13 M14.5 10.8 V13"/></g><rect x="6.5" y="6.8" width="4" height="4" fill="#f0f0f0"/></svg>
<div class="t" style="left:980.70px;top:152.25px;font-size:8.8px;color:#d2d2d2;font-weight:normal;">X:</div>
<div class="a" style="left:994px;top:146px;width:30px;height:18px;background:#4e4e4e;border-radius:2px 0 0 2px"></div>
<div class="t" style="left:999.00px;top:151.92px;font-size:8.6px;color:#6c6c6c;font-weight:normal;">0 px</div>
<div class="t" style="left:980.70px;top:174.05px;font-size:8.8px;color:#d2d2d2;font-weight:normal;">Y:</div>
<div class="a" style="left:994px;top:168.5px;width:30px;height:18px;background:#4e4e4e;border-radius:2px 0 0 2px"></div>
<div class="t" style="left:999.00px;top:173.92px;font-size:8.6px;color:#6c6c6c;font-weight:normal;">0 px</div>
<svg class="a" style="left:976px;top:193px;" width="14" height="9" viewBox="0 0 14 9"><path d="M1 8 L7 1.5 M1 8 H11.5 M5 4 C7 5 8 6.5 8 8" fill="none" stroke="#d6d6d6" stroke-width="1.1"/><circle cx="13" cy="3.5" r="0.7" fill="#d6d6d6"/><circle cx="13" cy="7" r="0.7" fill="#d6d6d6"/></svg>
<div class="a" style="left:990.5px;top:191px;width:34px;height:17px;background:#4e4e4e;border-radius:2px 0 0 2px"></div>
<div class="t" style="left:994.00px;top:196.42px;font-size:8.6px;color:#6c6c6c;font-weight:normal;">0°</div>
<div class="a" style="left:947px;top:225px;width:77px;height:2px;background:#474747;"></div>
<div class="t" style="left:955.00px;top:238.29px;font-size:8.4px;color:#d2d2d2;font-weight:normal;transform:scaleX(0.9791);transform-origin:0 0;">Appearance</div>
<div class="a" style="left:955.5px;top:259px;width:15px;height:14px;background:#ffffff;border:1px solid #777"></div>
<div class="t" style="left:980.01px;top:262.39px;font-size:8.4px;color:#d2d2d2;font-weight:normal;transform:scaleX(1.0234);transform-origin:0 0;">Fill</div>
<div class="a" style="left:955.5px;top:283.5px;width:15px;height:14px;background:#111;border:1px solid #cfcfcf"></div>
<div class="a" style="left:959.5px;top:287.5px;width:7px;height:6px;border:1px solid #e0e0e0"></div>
<div class="t" style="left:980.06px;top:286.59px;font-size:8.4px;color:#d2d2d2;font-weight:normal;transform:scaleX(1.0369);transform-origin:0 0;">Stroke</div>
<svg class="a" style="left:980.5px;top:296px;" width="26" height="1" viewBox="0 0 26 1"><path d="M0 0.5 H26" stroke="#c0c0c0" stroke-dasharray="1 1"/></svg>
<svg class="a" style="left:955.5px;top:308px;" width="15" height="14" viewBox="0 0 15 14"><rect x="0.5" y="0.5" width="14" height="13" fill="#666" stroke="#8a8a8a"/><g fill="#5a5a5a"><rect x="1" y="1" width="3.3" height="3.3"/><rect x="7.6" y="1" width="3.3" height="3.3"/><rect x="4.3" y="4.3" width="3.3" height="3.3"/><rect x="10.9" y="4.3" width="3.3" height="3.3"/><rect x="1" y="7.6" width="3.3" height="3.3"/><rect x="7.6" y="7.6" width="3.3" height="3.3"/><rect x="4.3" y="10.9" width="3.3" height="2.5"/><rect x="10.9" y="10.9" width="3.3" height="2.5"/></g></svg>
<div class="t" style="left:980.08px;top:310.59px;font-size:8.4px;color:#d2d2d2;font-weight:normal;transform:scaleX(0.9980);transform-origin:0 0;">Opacity</div>
<svg class="a" style="left:980.5px;top:320.5px;" width="30" height="1" viewBox="0 0 30 1"><path d="M0 0.5 H30" stroke="#c0c0c0" stroke-dasharray="1 1"/></svg>
<div class="a" style="left:1021px;top:283px;width:3px;height:15px;background:#4a4a4a;border:1px solid #5e5e5e"></div>
<div class="a" style="left:1021px;top:306px;width:3px;height:15px;background:#4a4a4a;border:1px solid #5e5e5e"></div>
<div class="t" style="left:960.50px;top:337.89px;font-size:11px;color:#cfcfcf;font-weight:normal;font-family:"Liberation Serif",serif"><i>fx</i></div>
<svg class="a" style="left:971px;top:346px;" width="3" height="2" viewBox="0 0 3 2"><path d="M0 0 H3 L1.5 2 Z" fill="#cfcfcf"/></svg>
<div class="a" style="left:947px;top:371px;width:77px;height:2px;background:#474747;"></div>
<div class="t" style="left:954.69px;top:387.59px;font-size:8.4px;color:#d2d2d2;font-weight:normal;transform:scaleX(1.0603);transform-origin:0 0;">Brush</div>
<div class="a" style="left:1000px;top:382.7px;width:24px;height:16px;background:#e4e4e4;"></div>
<div class="a" style="left:1006px;top:390px;width:18px;height:2px;background:#000;"></div>
<div class="a" style="left:947px;top:414px;width:77px;height:2px;background:#474747;"></div>
<div class="t" style="left:954.57px;top:430.99px;font-size:8.4px;color:#d2d2d2;font-weight:normal;transform:scaleX(1.0233);transform-origin:0 0;">Quick Actions</div>
<div class="a" style="left:734px;top:334px;width:140px;height:1px;background:#cfcfcf;"></div>
<div class="a" style="left:712px;top:336px;width:166px;height:224px;background:rgba(0,0,0,0.18);filter:blur(1.5px)"></div>
<div class="a" style="left:710px;top:334px;width:164px;height:222px;background:#f0f0f0;border:1px solid #c8c8c8"></div>
<div class="t" style="left:740.13px;top:341.24px;font-size:10px;color:#1a1a2a;font-weight:normal;transform:scaleX(0.9422);transform-origin:0 0;">Save Brushes...</div>
<div class="a" style="left:737px;top:357px;width:135px;height:1px;background:#d4d4d4;"></div>
<div class="a" style="left:712px;top:511px;width:157px;height:19px;background:#91c9f7;"></div>
<div class="t" style="left:740.60px;top:365.94px;font-size:10px;color:#1a1a2a;font-weight:normal;transform:scaleX(1.0097);transform-origin:0 0;">Arrows</div>
<svg class="a" style="left:860px;top:367.09999999999997px;" width="5" height="7" viewBox="0 0 5 7"><path d="M0.6 0.6 L3.8 3.5 L0.6 6.4" fill="none" stroke="#333" stroke-width="1.1"/></svg>
<div class="t" style="left:740.60px;top:384.84px;font-size:10px;color:#1a1a2a;font-weight:normal;transform:scaleX(1.0370);transform-origin:0 0;">Artistic</div>
<svg class="a" style="left:860px;top:386.0px;" width="5" height="7" viewBox="0 0 5 7"><path d="M0.6 0.6 L3.8 3.5 L0.6 6.4" fill="none" stroke="#333" stroke-width="1.1"/></svg>
<div class="t" style="left:739.80px;top:403.24px;font-size:10px;color:#1a1a2a;font-weight:normal;transform:scaleX(0.9941);transform-origin:0 0;">Borders</div>
<svg class="a" style="left:860px;top:404.4px;" width="5" height="7" viewBox="0 0 5 7"><path d="M0.6 0.6 L3.8 3.5 L0.6 6.4" fill="none" stroke="#333" stroke-width="1.1"/></svg>
<div class="t" style="left:739.81px;top:422.04px;font-size:10px;color:#1a1a2a;font-weight:normal;transform:scaleX(0.9909);transform-origin:0 0;">Bristle Brush</div>
<svg class="a" style="left:860px;top:423.2px;" width="5" height="7" viewBox="0 0 5 7"><path d="M0.6 0.6 L3.8 3.5 L0.6 6.4" fill="none" stroke="#333" stroke-width="1.1"/></svg>
<div class="t" style="left:739.78px;top:440.44px;font-size:10px;color:#1a1a2a;font-weight:normal;transform:scaleX(1.0237);transform-origin:0 0;">Decorative</div>
<svg class="a" style="left:860px;top:441.59999999999997px;" width="5" height="7" viewBox="0 0 5 7"><path d="M0.6 0.6 L3.8 3.5 L0.6 6.4" fill="none" stroke="#333" stroke-width="1.1"/></svg>
<div class="t" style="left:739.69px;top:459.13px;font-size:10px;color:#1a1a2a;font-weight:normal;transform:scaleX(1.0163);transform-origin:0 0;">Image Brush</div>
<svg class="a" style="left:860px;top:460.29999999999995px;" width="5" height="7" viewBox="0 0 5 7"><path d="M0.6 0.6 L3.8 3.5 L0.6 6.4" fill="none" stroke="#333" stroke-width="1.1"/></svg>
<div class="t" style="left:740.60px;top:478.04px;font-size:10px;color:#1a1a2a;font-weight:normal;transform:scaleX(0.9639);transform-origin:0 0;">Vector Packs</div>
<svg class="a" style="left:860px;top:479.2px;" width="5" height="7" viewBox="0 0 5 7"><path d="M0.6 0.6 L3.8 3.5 L0.6 6.4" fill="none" stroke="#333" stroke-width="1.1"/></svg>
<div class="t" style="left:740.60px;top:496.63px;font-size:10px;color:#1a1a2a;font-weight:normal;transform:scaleX(0.9864);transform-origin:0 0;">Wacom 6D Brushes</div>
<svg class="a" style="left:860px;top:497.79999999999995px;" width="5" height="7" viewBox="0 0 5 7"><path d="M0.6 0.6 L3.8 3.5 L0.6 6.4" fill="none" stroke="#333" stroke-width="1.1"/></svg>
<div class="t" style="left:739.80px;top:515.53px;font-size:10px;color:#1a1a2a;font-weight:normal;transform:scaleX(1.0018);transform-origin:0 0;">User Defined</div>
<svg class="a" style="left:860px;top:516.6999999999999px;" width="5" height="7" viewBox="0 0 5 7"><path d="M0.6 0.6 L3.8 3.5 L0.6 6.4" fill="none" stroke="#333" stroke-width="1.1"/></svg>
<div class="t" style="left:740.09px;top:540.53px;font-size:10px;color:#1a1a2a;font-weight:normal;transform:scaleX(1.0217);transform-origin:0 0;">Other Library...</div>
<div class="a" style="left:871px;top:512px;width:148px;height:21px;background:rgba(0,0,0,0.25);filter:blur(1px)"></div>
<div class="a" style="left:869px;top:511px;width:147px;height:19px;background:#f0f0f0;border-right:1px solid #555"></div>
<div class="t" style="left:898.06px;top:515.63px;font-size:10px;color:#1a1a2a;font-weight:normal;transform:scaleX(1.0404);transform-origin:0 0;">Imported Brush</div>
<svg class="a" style="left:1001.5px;top:517px;" width="5" height="7" viewBox="0 0 5 7"><path d="M0.6 0.6 L3.8 3.5 L0.6 6.4" fill="none" stroke="#333" stroke-width="1.1"/></svg>
<div class="a" style="left:703.3px;top:311px;width:35.4px;height:26.8px;border:3.8px solid #f60000;border-radius:3.5px"></div>
<div class="a" style="left:708px;top:507px;width:313.5px;height:27.5px;border:4px solid #f60000;border-radius:3px"></div>
<svg class="a" style="left:715.5px;top:339px;" width="14" height="165" viewBox="0 0 14 165"><path d="M7.2 0.5 L7.9 157" stroke="#d80000" stroke-width="2.7"/><path d="M3.2 154 L7.9 161.4 L12.6 154" fill="none" stroke="#d80000" stroke-width="3" stroke-linejoin="miter" stroke-linecap="round"/></svg>
</body></html>
